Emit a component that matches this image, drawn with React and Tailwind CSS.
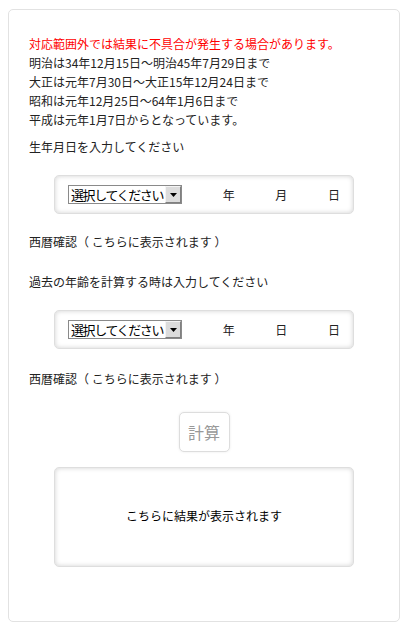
import { useState } from "react";

const font = { fontFamily: '"Noto Sans CJK JP", "Noto Sans", sans-serif' };

function FakeSelect() {
  return (
    <div className="flex h-[19px] w-[114px] items-stretch border border-[#8a8a8a] bg-white">
      <span className="flex flex-1 items-center overflow-hidden whitespace-nowrap pl-[2px] text-[13px] leading-none tracking-[-1.4px] text-black">
        選択してください
      </span>
      <span className="flex w-[16px] items-center justify-center border border-l-[#f4f4f4] border-t-[#f4f4f4] border-r-[#808080] border-b-[#808080] bg-[#dcdcdc]">
        <svg width="7" height="4" viewBox="0 0 7 4">
          <path d="M0 0h7L3.5 4z" fill="#000" />
        </svg>
      </span>
    </div>
  );
}

function DateBox({ labels }) {
  return (
    <div className="mx-auto flex h-[39px] w-[300px] items-center justify-between rounded-[5px] border border-[#dedede] bg-white px-[13px] shadow-[inset_0_0_5px_rgba(0,0,0,0.18)]">
      <FakeSelect />
      {labels.map((label, i) => (
        <span key={i} className="text-[12px] leading-none text-[#222]">
          {label}
        </span>
      ))}
    </div>
  );
}

export default function App() {
  const [result] = useState("こちらに結果が表示されます");

  return (
    <div className="min-h-screen bg-white pl-[8px] pt-[9px]" style={font}>
      <div className="w-[392px] rounded-[5px] border border-[#e2e2e2] bg-white px-[20px] pb-[54px] pt-[24px] text-[12px] leading-[19px] text-[#222]">
        <div>
          <p className="text-[#ff0000]">対応範囲外では結果に不具合が発生する場合があります。</p>
          <p>明治は34年12月15日〜明治45年7月29日まで</p>
          <p>大正は元年7月30日〜大正15年12月24日まで</p>
          <p>昭和は元年12月25日〜64年1月6日まで</p>
          <p>平成は元年1月7日からとなっています。</p>
        </div>

        <p className="mt-[8px]">生年月日を入力してください</p>
        <div className="mt-[19px]">
          <DateBox labels={["年", "月", "日"]} />
        </div>
        <p className="mt-[18px]">西暦確認（ こちらに表示されます ）</p>

        <p className="mt-[21px]">過去の年齢を計算する時は入力してください</p>
        <div className="mt-[19px]">
          <DateBox labels={["年", "日", "日"]} />
        </div>
        <p className="mt-[20px]">西暦確認（ こちらに表示されます ）</p>

        <div className="mt-[24px] flex justify-center">
          <button
            type="button"
            className="h-[40px] w-[51px] rounded-[5px] border border-[#dddddd] bg-white text-[16px] text-[#999999] shadow-[0_0_3px_rgba(0,0,0,0.08)]"
          >
            計算
          </button>
        </div>

        <div className="mx-auto mt-[15px] flex h-[100px] w-[300px] items-center justify-center rounded-[5px] border border-[#dedede] bg-white pb-[3px] shadow-[inset_0_0_5px_rgba(0,0,0,0.18)]">
          <span className="text-[12px] text-black">{result}</span>
        </div>
      </div>
    </div>
  );
}
